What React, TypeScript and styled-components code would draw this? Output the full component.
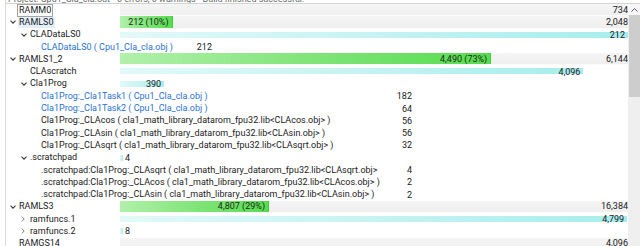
import React from 'react';
import styled, { createGlobalStyle, css } from 'styled-components';

type Kind = 'region' | 'section' | 'file';

interface MemNode {
  label: string;
  level: number;
  kind: Kind;
  twisty?: 'open' | 'closed';
  link?: boolean;
  focused?: boolean;
  hovered?: boolean;
  used?: number; // region: used bytes, section: size
  total?: number; // region: capacity, section: parent used
  valueRight?: number; // file rows: x of the right edge of the size
}

const BAR_LEFT = 120;

const rows: MemNode[] = [
  { label: 'RAMM0', level: 0, kind: 'region', used: 0, total: 734, focused: true },
  { label: 'RAMLS0', level: 0, kind: 'region', twisty: 'open', used: 212, total: 2048, hovered: true },
  { label: 'CLADataLS0', level: 1, kind: 'section', twisty: 'open', used: 212, total: 212 },
  { label: 'CLADataLS0 ( Cpu1_Cla_cla.obj )', level: 2, kind: 'file', link: true, used: 212, valueRight: 212 },
  { label: 'RAMLS1_2', level: 0, kind: 'region', twisty: 'open', used: 4490, total: 6144 },
  { label: 'CLAscratch', level: 1, kind: 'section', used: 4096, total: 4490 },
  { label: 'Cla1Prog', level: 1, kind: 'section', twisty: 'open', used: 390, total: 4490 },
  { label: 'Cla1Prog:_Cla1Task1 ( Cpu1_Cla_cla.obj )', level: 2, kind: 'file', link: true, used: 182, valueRight: 412 },
  { label: 'Cla1Prog:_Cla1Task2 ( Cpu1_Cla_cla.obj )', level: 2, kind: 'file', link: true, used: 64, valueRight: 412 },
  { label: 'Cla1Prog:_CLAcos ( cla1_math_library_datarom_fpu32.lib<CLAcos.obj> )', level: 2, kind: 'file', used: 56, valueRight: 412 },
  { label: 'Cla1Prog:_CLAsin ( cla1_math_library_datarom_fpu32.lib<CLAsin.obj> )', level: 2, kind: 'file', used: 56, valueRight: 412 },
  { label: 'Cla1Prog:_CLAsqrt ( cla1_math_library_datarom_fpu32.lib<CLAsqrt.obj> )', level: 2, kind: 'file', used: 32, valueRight: 412 },
  { label: '.scratchpad', level: 1, kind: 'section', twisty: 'open', used: 4, total: 4490 },
  { label: '.scratchpad:Cla1Prog:_CLAsqrt ( cla1_math_library_datarom_fpu32.lib<CLAsqrt.obj>', level: 2, kind: 'file', used: 4, valueRight: 412 },
  { label: '.scratchpad:Cla1Prog:_CLAcos ( cla1_math_library_datarom_fpu32.lib<CLAcos.obj> )', level: 2, kind: 'file', used: 2, valueRight: 412 },
  { label: '.scratchpad:Cla1Prog:_CLAsin ( cla1_math_library_datarom_fpu32.lib<CLAsin.obj> )', level: 2, kind: 'file', used: 2, valueRight: 412 },
  { label: 'RAMLS3', level: 0, kind: 'region', twisty: 'open', used: 4807, total: 16384 },
  { label: 'ramfuncs.1', level: 1, kind: 'section', twisty: 'closed', used: 4799, total: 4807 },
  { label: 'ramfuncs.2', level: 1, kind: 'section', twisty: 'closed', used: 8, total: 4807 },
  { label: 'RAMGS14', level: 0, kind: 'region', used: 0, total: 4096 },
];

const GlobalStyle = createGlobalStyle`
  html, body {
    margin: 0;
    padding: 0;
    background: #fff;
  }
  body {
    font-family: Roboto, "Noto Sans", "Liberation Sans", sans-serif;
    font-size: 9px;
    color: #1c1c1c;
  }
`;

const Window = styled.div`
  width: 634px;
  height: 246px;
  margin-left: 5px;
  border-left: 1px solid #dadada;
  display: flex;
  flex-direction: column;
  overflow: hidden;
  background: #fff;
`;

const StatusLine = styled.div`
  height: 3px;
  flex: none;
  overflow: hidden;
  border-bottom: 1px solid #d4d4d4;
  padding-left: 2px;
  color: #6a6a6a;
  line-height: 10px;
  white-space: nowrap;

  span {
    display: block;
    margin-top: -6px;
  }
`;

const Body = styled.div`
  flex: 1;
  min-height: 0;
  display: flex;
`;

const Tree = styled.div`
  flex: 1;
  min-width: 0;
  overflow: hidden;
`;

const Row = styled.div`
  height: 12.3px;
  display: flex;
  align-items: stretch;
`;

const LabelCell = styled.div<{ $level: number }>`
  width: ${BAR_LEFT - 6}px;
  flex: none;
  display: flex;
  align-items: center;
  padding-left: ${({ $level }) => 3 + $level * 11}px;
  box-sizing: border-box;
  white-space: nowrap;
  overflow: visible;
`;

const Twisty = styled.span`
  width: 10px;
  flex: none;
  display: flex;
  align-items: center;
  padding-left: 1px;
  box-sizing: border-box;
`;

const Label = styled.span<{ $link?: boolean; $focused?: boolean; $hovered?: boolean }>`
  display: inline-block;
  line-height: 11px;
  padding: 0 1px;
  margin-left: -1px;
  color: ${({ $link }) => ($link ? '#2a72d4' : '#1a1a1a')};
  ${({ $focused }) =>
    $focused &&
    css`
      outline: 1px solid #a3a3a3;
    `}
  ${({ $hovered }) =>
    $hovered &&
    css`
      background: #e3effb;
    `}
`;

const BarCell = styled.div<{ $track?: boolean }>`
  flex: 1;
  min-width: 0;
  display: flex;
  align-items: center;
  ${({ $track }) =>
    $track &&
    css`
      background: linear-gradient(#f5f5f5, #efefef);
      border-bottom: 1px solid #fbfbfb;
    `}
`;

const Fill = styled.div<{ $tone: 'green' | 'cyan' }>`
  align-self: stretch;
  flex: none;
  min-width: 2px;
  display: flex;
  align-items: center;
  justify-content: flex-end;
  box-sizing: border-box;
  padding-right: 3px;
  white-space: nowrap;
  ${({ $tone }) =>
    $tone === 'green'
      ? css`
          background: linear-gradient(90deg, #b2f0ab 0%, #86e67f 45%, #56dc4f 100%);
          border-right: 1px solid #45cc3f;
          color: #1a2a18;
        `
      : css`
          background: linear-gradient(90deg, #e2f9f9 0%, #c6f3f3 50%, #a6eded 100%);
          background-size: 100% 6px;
          background-position: 0 3px;
          background-repeat: no-repeat;
          color: #1a1a1a;
        `}
`;

const Outside = styled.span`
  margin-left: 2px;
  white-space: nowrap;
  color: #1a1a1a;
`;

const Total = styled.span`
  margin-left: auto;
  white-space: nowrap;
  color: #1a1a1a;
`;

const FileSize = styled.span`
  flex: none;
  text-align: right;
  white-space: nowrap;
  color: #1a1a1a;
`;

const Scrollbar = styled.div`
  width: 12px;
  flex: none;
  background: #efefef;
  display: flex;
  flex-direction: column;
`;

const ArrowButton = styled.div`
  height: 11px;
  flex: none;
  display: flex;
  align-items: center;
  justify-content: center;
  background: #f7f7f7;
`;

const Thumb = styled.div`
  height: 82px;
  flex: none;
  margin: 0 0.5px;
  background: #cdcdcd;
`;

const fmt = (n: number) => n.toLocaleString('en-US');

const TwistyIcon = ({ state }: { state?: 'open' | 'closed' }) => {
  if (state === 'open') {
    return (
      <svg width="6" height="4" viewBox="0 0 6 4">
        <polyline points="0.5,0.6 3,3.2 5.5,0.6" fill="none" stroke="#3a3a3a" strokeWidth="1.1" />
      </svg>
    );
  }
  if (state === 'closed') {
    return (
      <svg width="4" height="6" viewBox="0 0 4 6">
        <polyline points="0.8,0.6 3.2,3 0.8,5.4" fill="none" stroke="#7a7a7a" strokeWidth="1" />
      </svg>
    );
  }
  return null;
};

const UsageBar = ({ node }: { node: MemNode }) => {
  const used = node.used ?? 0;
  const total = node.total ?? 1;
  const ratio = used / total;
  const wide = ratio * 508 > 24;

  if (node.kind === 'region') {
    const pct = Math.round(ratio * 100);
    return (
      <BarCell $track>
        {used > 0 && (
          <Fill $tone="green" style={{ width: `${ratio * 100}%` }}>
            {fmt(used)} ({pct}%)
          </Fill>
        )}
        <Total>{fmt(total)}</Total>
      </BarCell>
    );
  }

  if (node.kind === 'section') {
    return (
      <BarCell>
        <Fill $tone="cyan" style={{ width: `${ratio * 100}%` }}>
          {wide ? fmt(used) : null}
        </Fill>
        {!wide && <Outside>{fmt(used)}</Outside>}
      </BarCell>
    );
  }

  return (
    <BarCell>
      <FileSize style={{ width: `${(node.valueRight ?? BAR_LEFT) - BAR_LEFT}px` }}>{fmt(used)}</FileSize>
    </BarCell>
  );
};

const TreeRow = ({ node }: { node: MemNode }) => (
  <Row>
    <LabelCell $level={node.level}>
      <Twisty>
        <TwistyIcon state={node.twisty} />
      </Twisty>
      <Label $link={node.link} $focused={node.focused} $hovered={node.hovered}>
        {node.label}
      </Label>
    </LabelCell>
    <UsageBar node={node} />
  </Row>
);

export default function App() {
  return (
    <>
      <GlobalStyle />
      <Window>
        <StatusLine>
          <span>Project: Cpu1_Cla_cla.out - 0 errors, 0 warnings - Build finished successful.</span>
        </StatusLine>
        <Body>
          <Tree>
            {rows.map((node, i) => (
              <TreeRow key={i} node={node} />
            ))}
          </Tree>
          <Scrollbar>
            <ArrowButton>
              <svg width="7" height="4" viewBox="0 0 7 4">
                <polyline points="0.5,3.5 3.5,0.6 6.5,3.5" fill="none" stroke="#5a5a5a" strokeWidth="1" />
              </svg>
            </ArrowButton>
            <Thumb />
          </Scrollbar>
        </Body>
      </Window>
    </>
  );
}
